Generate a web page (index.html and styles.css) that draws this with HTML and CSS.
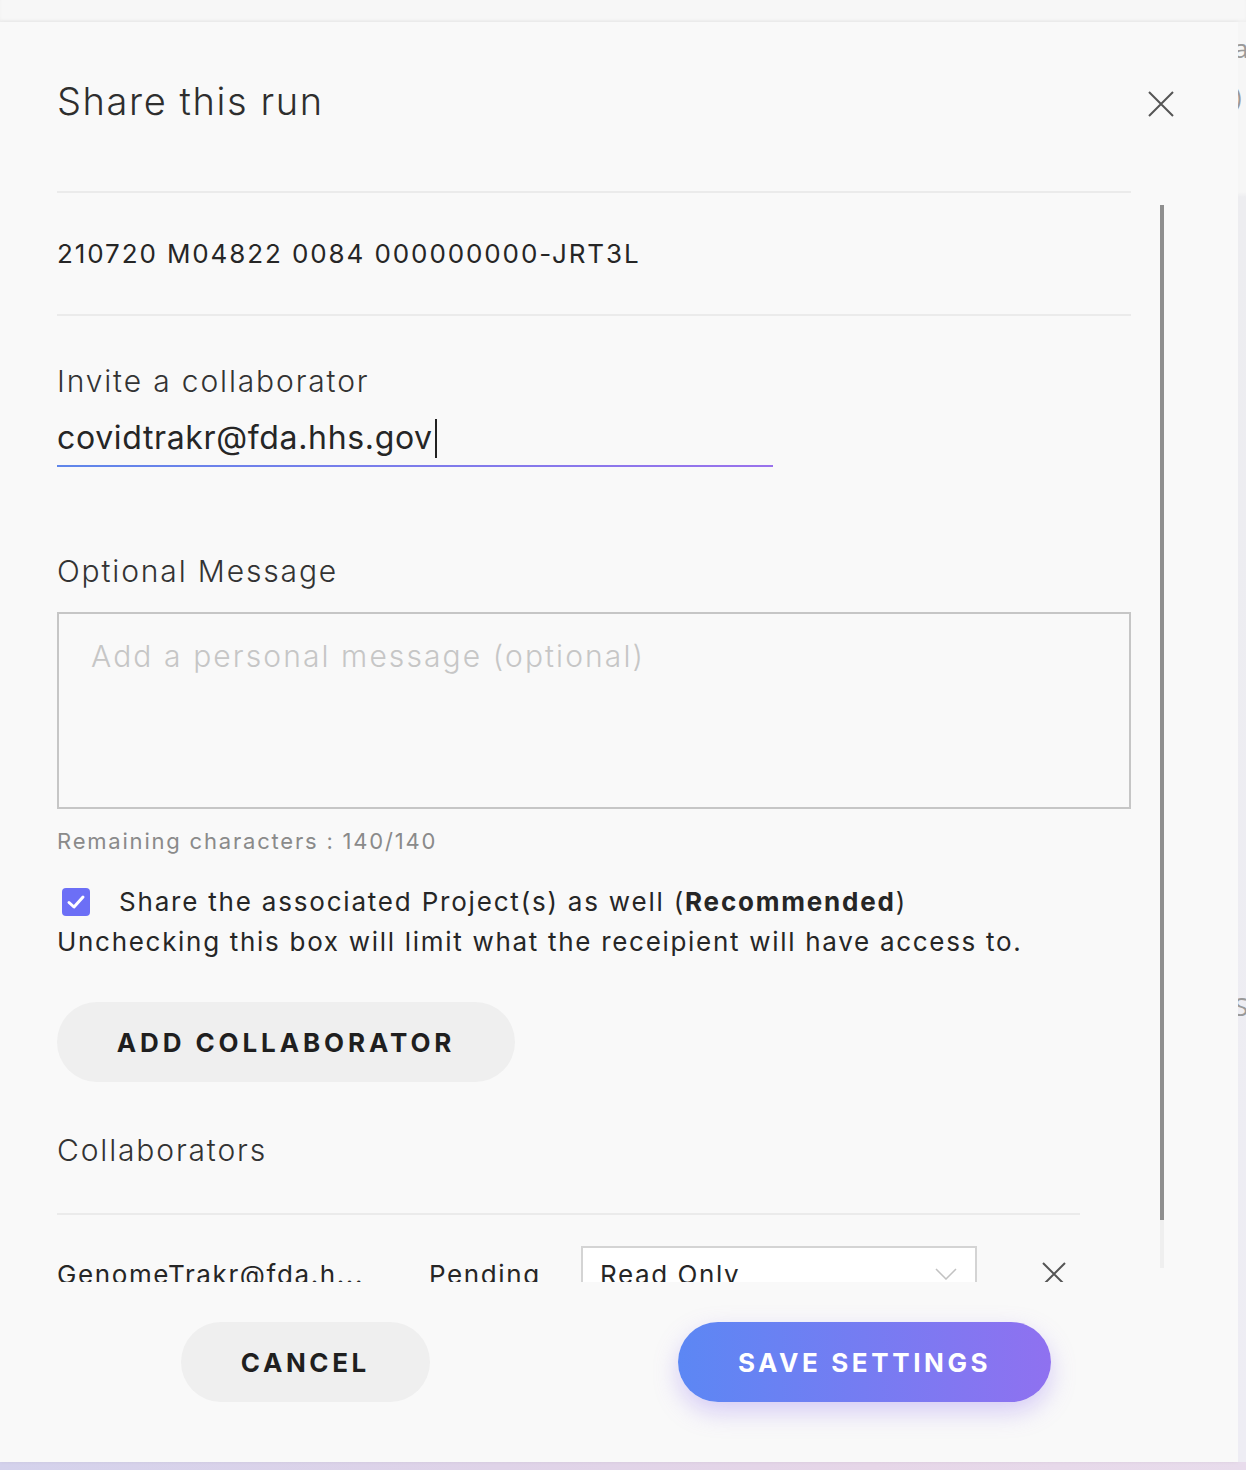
FILE: index.html
```html
<!DOCTYPE html>
<html lang="en">
<head>
<meta charset="utf-8">
<title>Share this run</title>
<link rel="stylesheet" href="styles.css">
</head>
<body>
<div class="page">
  <div class="topband"></div>
  <div class="stage">
    <section class="modal">
      <header class="modal-header">
        <h1 class="modal-title">Share this run</h1>
        <button class="icon-btn close-btn" aria-label="Close">
          <svg width="26" height="26" viewBox="0 0 26 26"><path d="M1 1 L25 25 M25 1 L1 25" stroke="#555" stroke-width="2" fill="none"/></svg>
        </button>
      </header>
      <div class="divider header-divider"></div>
      <div class="modal-body">
        <div class="scroll">
          <div class="run-id">210720 M04822 0084 000000000-JRT3L</div>
          <div class="divider"></div>
          <div class="field-label invite-label">Invite a collaborator</div>
          <div class="text-input">covidtrakr@fda.hhs.gov<span class="caret"></span></div>
          <div class="field-label message-label">Optional Message</div>
          <div class="textarea"><span class="placeholder">Add a personal message (optional)</span></div>
          <p class="remaining">Remaining characters : 140/140</p>
          <div class="check-row">
            <span class="checkbox"><svg width="24" height="24" viewBox="0 0 24 24"><path d="M5 12.5 L10 17 L19 7" stroke="#fff" stroke-width="3" fill="none" stroke-linecap="round" stroke-linejoin="round"/></svg></span>
            <span class="check-text">Share the associated Project(s) as well (<b>Recommended</b>)</span>
          </div>
          <p class="hint">Unchecking this box will limit what the receipient will have access to.</p>
          <button class="btn btn-grey add-btn">ADD COLLABORATOR</button>
          <h2 class="field-label collab-title">Collaborators</h2>
          <div class="divider short"></div>
          <div class="collab-row">
            <span class="collab-email">GenomeTrakr@fda.h...</span>
            <span class="collab-status">Pending</span>
            <div class="select">
              <span>Read Only</span>
              <svg width="22" height="12" viewBox="0 0 22 12"><path d="M1 1 L11 11 L21 1" stroke="#c2c2c2" stroke-width="1.5" fill="none"/></svg>
            </div>
            <button class="icon-btn row-remove" aria-label="Remove">
              <svg width="24" height="24" viewBox="0 0 24 24"><path d="M1 1 L23 23 M23 1 L1 23" stroke="#555" stroke-width="2" fill="none"/></svg>
            </button>
          </div>
        </div>
        <div class="scrollbar"><div class="thumb"></div></div>
      </div>
      <footer class="modal-footer">
        <button class="btn btn-grey">CANCEL</button>
        <button class="btn btn-primary">SAVE SETTINGS</button>
      </footer>
    </section>
    <div class="backdrop-right">
      <span class="ghost g1">a</span>
      <span class="ghost g2">)</span>
      <span class="ghost g3">S</span>
    </div>
  </div>
  <div class="bottom-strip"></div>
</div>
</body>
</html>
```
FILE: styles.css
```css
* { box-sizing: border-box; }
html, body { margin: 0; padding: 0; }
body {
  width: 1246px;
  height: 1470px;
  overflow: hidden;
  background: #f0f0f3;
  font-family: Inter, "Noto Sans", sans-serif;
  color: #2a2a2a;
}
.page { width: 1246px; height: 1470px; display: flex; flex-direction: column; }
.topband {
  height: 22px;
  background: #f7f7f7;
  box-shadow: inset 0 -2px 3px rgba(0,0,0,0.03);
}
.stage { height: 1440px; display: flex; }
.modal {
  width: 1238px;
  height: 1440px;
  background: #f9f9f9;
  position: relative;
  box-shadow: 0 0 4px rgba(0,0,0,0.06);
}
.modal-header {
  height: 169px;
  display: flex;
  align-items: flex-start;
  justify-content: space-between;
  padding: 56px 64px 0 57px;
}
.modal-title {
  margin: 0;
  font-size: 38px;
  line-height: 46px;
  font-weight: 300;
  letter-spacing: 1.6px;
  color: #2e2e2e;
}
.icon-btn {
  border: 0;
  background: none;
  padding: 0;
  display: block;
  line-height: 0;
}
.close-btn { margin-top: 13px; }
.divider {
  height: 2px;
  background: #ebebeb;
  width: 1074px;
}
.header-divider { margin-left: 57px; }
.modal-body {
  height: 1089px;
  padding-left: 57px;
}
.scroll {
  width: 1074px;
  height: 1089px;
  overflow: hidden;
  padding-top: 45px;
}
.run-id {
  font-size: 26px;
  line-height: 32px;
  letter-spacing: 1.9px;
  color: #262626;
}
.run-id + .divider { margin-top: 44px; }
.field-label {
  margin: 0;
  font-size: 30px;
  line-height: 36px;
  font-weight: 300;
  letter-spacing: 1.85px;
  color: #333;
}
.invite-label { margin-top: 47px; }
.text-input {
  margin-top: 19px;
  width: 716px;
  font-size: 32px;
  line-height: 40px;
  letter-spacing: 0.65px;
  color: #262626;
  padding-bottom: 7px;
  border-bottom: 2px solid transparent;
  border-image: linear-gradient(90deg, #5f86ea, #9a72ec) 1;
  display: flex;
  align-items: center;
}
.caret {
  display: inline-block;
  width: 2px;
  height: 39px;
  background: #222;
  margin-left: 2px;
}
.message-label { margin-top: 86px; }
.textarea {
  margin-top: 23px;
  height: 197px;
  border: 2px solid #c6c6c6;
  padding: 24px 32px;
}
.placeholder {
  font-size: 30px;
  line-height: 36px;
  font-weight: 300;
  letter-spacing: 2.1px;
  color: #c6c6c6;
}
.remaining {
  margin: 18px 0 0;
  font-size: 22px;
  line-height: 28px;
  letter-spacing: 1.8px;
  color: #8a8a8a;
}
.check-row {
  margin-top: 27px;
  display: flex;
  align-items: center;
  height: 40px;
}
.checkbox {
  width: 28px;
  height: 28px;
  margin-left: 5px;
  margin-right: 29px;
  border-radius: 4px;
  background: #6c6ff6;
  display: flex;
  align-items: center;
  justify-content: center;
}
.check-text, .hint {
  font-size: 26px;
  line-height: 40px;
  letter-spacing: 1.8px;
  color: #262626;
}
.hint { letter-spacing: 1.7px; }
.check-text b { font-weight: 700; }
.hint { margin: 0; }
.btn {
  border: 0;
  height: 80px;
  border-radius: 40px;
  padding: 0 60px;
  font-family: Inter, "Noto Sans", sans-serif;
  font-size: 26px;
  font-weight: 700;
  letter-spacing: 3.6px;
  color: #1f1f1f;
}
.btn-grey { background: #efefef; }
.add-btn {
  display: block;
  margin-top: 40px;
  width: 458px;
  padding: 0;
  letter-spacing: 3.9px;
}
.collab-title { margin-top: 50px; }
.divider.short { width: 1023px; margin-top: 45px; }
.collab-row {
  margin-top: 31px;
  display: flex;
  align-items: center;
  font-size: 26px;
  letter-spacing: 1.6px;
  color: #262626;
}
.collab-email { width: 372px; }
.collab-status { width: 152px; }
.select {
  width: 396px;
  height: 56px;
  border: 2px solid #d4d4d4;
  background: #fff;
  display: flex;
  align-items: center;
  justify-content: space-between;
  padding: 0 18px 0 17px;
}
.row-remove { margin-left: 65px; }
.scrollbar {
  position: absolute;
  left: 1160px;
  top: 183px;
  width: 4px;
  height: 1063px;
  background: #efefef;
}
.thumb {
  width: 4px;
  height: 1015px;
  background: #8f8f8f;
}
.modal-footer {
  display: flex;
  justify-content: center;
  gap: 248px;
  padding-top: 40px;
  padding-right: 6px;
}
.btn-primary {
  color: #fff;
  background: linear-gradient(90deg, #5c87f4, #8f71f0);
  box-shadow: 0 10px 24px rgba(150, 120, 240, 0.35);
}
.backdrop-right {
  width: 8px;
  height: 1440px;
  overflow: hidden;
  position: relative;
  background: linear-gradient(180deg, #f6f6f6 0, #f6f6f6 170px, #ededf0 175px, #eeedf4 100%);
}
.ghost {
  position: absolute;
  left: -4px;
  font-family: "Open Sans", sans-serif;
  font-size: 26px;
  color: #9a9a9a;
}
.g1 { top: 8px; }
.g2 { top: 56px; }
.g3 { top: 966px; }
.bottom-strip {
  height: 8px;
  background: linear-gradient(90deg, #d4d2ec 0%, #dfd3e8 40%, #e6d6e8 70%, #e8dcec 100%);
}
```
